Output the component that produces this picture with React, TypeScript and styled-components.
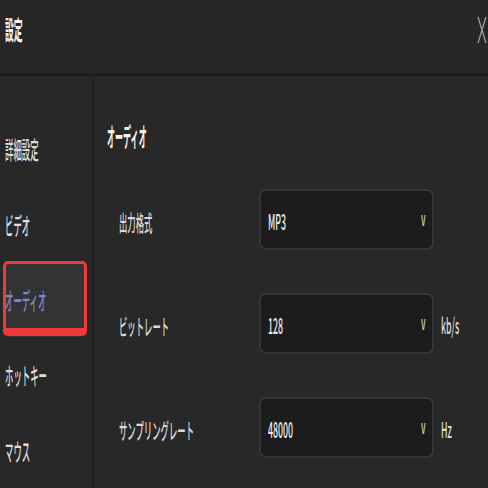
import React from 'react'
import styled, { createGlobalStyle } from 'styled-components'

const GlobalStyle = createGlobalStyle`
  body {
    margin: 0;
    background: #282828;
    font-family: "Noto Sans CJK JP", "Noto Sans", sans-serif;
  }
`

const Window = styled.div`
  width: 488px;
  height: 488px;
  display: flex;
  flex-direction: column;
  background: #282828;
  overflow: hidden;
`

const Header = styled.div`
  height: 73px;
  flex: none;
  display: flex;
  align-items: center;
  justify-content: space-between;
  padding: 0 1px 0 5px;
  border-bottom: 3px solid #1d1d1d;
  background: #272727;
`

// the whole screenshot is squeezed sideways, so every text run is too
const Squeeze = styled.span<{ $sx?: number }>`
  display: inline-block;
  white-space: nowrap;
  transform: scaleX(${(p) => p.$sx ?? 0.37});
  transform-origin: left center;
`

const Title = styled.div`
  font-size: 26px;
  font-weight: 700;
  color: #f2f2f2;
  line-height: 1;
  margin-top: -16px;
`

const CloseButton = styled.div`
  width: 10px;
  height: 28px;
  margin-top: -14px;
  display: flex;
`

const Body = styled.div`
  flex: 1;
  display: flex;
  min-height: 0;
`

const Sidebar = styled.div`
  width: 93px;
  flex: none;
  border-right: 1px solid #1c1c1c;
  padding-top: 35px;
  display: flex;
  flex-direction: column;
`

const NavItem = styled.div<{ $active?: boolean }>`
  position: relative;
  height: 76px;
  display: flex;
  align-items: center;
  font-size: 24px;
  font-weight: 500;
  color: ${(p) => (p.$active ? '#8088cc' : '#dedede')};
  background: ${(p) => (p.$active ? '#333333' : 'transparent')};
  margin-right: ${(p) => (p.$active ? '6px' : '0')};
  margin-left: ${(p) => (p.$active ? '3px' : '0')};
  padding-left: ${(p) => (p.$active ? '2px' : '5px')};
  border-radius: 5px;

  ${(p) =>
    p.$active &&
    `
    &::after {
      content: '';
      position: absolute;
      inset: -1px 0 1px 0;
      border: 3px solid #f03a3a;
      border-bottom-width: 8px;
      border-radius: 5px;
      pointer-events: none;
    }
  `}
`

const Content = styled.div`
  flex: 1;
  padding: 44px 0 0 13px;
  display: flex;
  flex-direction: column;
`

const Heading = styled.div`
  height: 30px;
  display: flex;
  align-items: center;
  font-size: 26px;
  font-weight: 700;
  color: #f4f4f4;
  margin-bottom: 39px;
`

const Rows = styled.div`
  display: flex;
  flex-direction: column;
  gap: 43px;
  padding-left: 12px;
`

const Row = styled.div`
  display: grid;
  grid-template-columns: 140px 175px auto;
  align-items: center;
  height: 61px;
`

const Label = styled.div`
  font-size: 22px;
  font-weight: 500;
  color: #d9d9d9;
  padding-top: 2px;
`

const Select = styled.div`
  height: 61px;
  box-sizing: border-box;
  display: flex;
  align-items: center;
  justify-content: space-between;
  padding: 0 6px 0 7px;
  background: #1c1c1c;
  border: 2px solid #343434;
  border-radius: 7px;
  color: #ececec;
  font-size: 22px;
  font-weight: 500;
`

const Chevron = styled.span`
  font-size: 19px;
  color: #d0d0d0;
  width: 5px;
  margin-top: -4px;
`

const Unit = styled.div`
  font-size: 22px;
  font-weight: 500;
  color: #dcdcdc;
  margin-left: 7px;
`

const nav = ['詳細設定', 'ビデオ', 'オーディオ', 'ホットキー', 'マウス']

const fields = [
  { label: '出力格式', value: 'MP3', unit: '' },
  { label: 'ビットレート', value: '128', unit: 'kb/s' },
  { label: 'サンプリングレート', value: '48000', unit: 'Hz' },
]

export default function App() {
  return (
    <Window>
      <GlobalStyle />
      <Header>
        <Title>
          <Squeeze $sx={0.34}>設定</Squeeze>
        </Title>
        <CloseButton>
          <svg width="10" height="28" viewBox="0 0 10 28">
            <path d="M1 1 L9 27 M9 1 L1 27" stroke="#9c9c9c" strokeWidth="1.3" fill="none" />
          </svg>
        </CloseButton>
      </Header>
      <Body>
        <Sidebar>
          {nav.map((n) => (
            <NavItem key={n} $active={n === 'オーディオ'}>
              <Squeeze $sx={0.35}>{n}</Squeeze>
            </NavItem>
          ))}
        </Sidebar>
        <Content>
          <Heading>
            <Squeeze $sx={0.31}>オーディオ</Squeeze>
          </Heading>
          <Rows>
            {fields.map((f) => (
              <Row key={f.label}>
                <Label>
                  <Squeeze $sx={0.38}>{f.label}</Squeeze>
                </Label>
                <Select>
                  <Squeeze $sx={0.4}>{f.value}</Squeeze>
                  <Chevron>
                    <Squeeze $sx={0.45}>v</Squeeze>
                  </Chevron>
                </Select>
                <Unit>
                  <Squeeze $sx={0.4}>{f.unit}</Squeeze>
                </Unit>
              </Row>
            ))}
          </Rows>
        </Content>
      </Body>
    </Window>
  )
}
